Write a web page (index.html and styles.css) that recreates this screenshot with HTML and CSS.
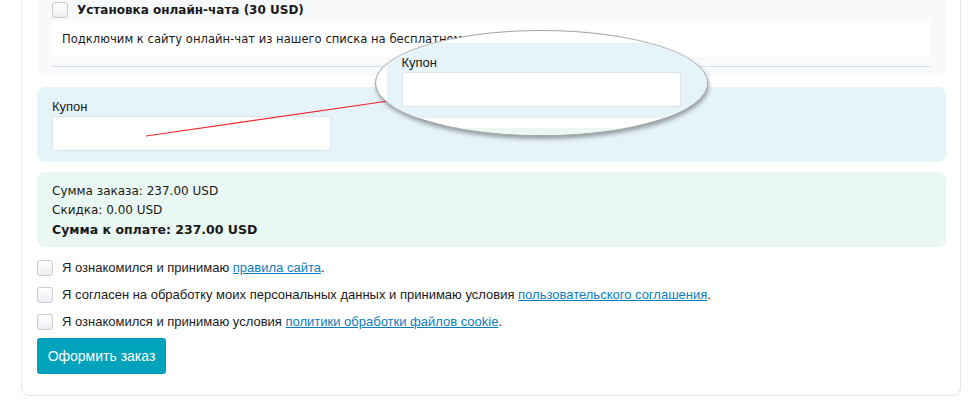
FILE: index.html
```html
<!DOCTYPE html>
<html lang="ru">
<head>
<meta charset="utf-8">
<title>Оформление заказа</title>
<link rel="stylesheet" href="styles.css">
</head>
<body>
<div class="card">
  <section class="service">
    <div class="service-head">
      <span class="cb"></span>
      <span class="service-title">Установка онлайн-чата (30 USD)</span>
    </div>
    <div class="service-desc">Подключим к сайту онлайн-чат из нашего списка на бесплатном тарифе.</div>
    <div class="service-rule"></div>
  </section>

  <section class="coupon">
    <label class="coupon-label">Купон</label>
    <div class="coupon-input"></div>
  </section>

  <section class="summary">
    <div>Сумма заказа: 237.00 USD</div>
    <div>Скидка: 0.00 USD</div>
    <div class="summary-total">Сумма к оплате: 237.00 USD</div>
  </section>

  <div class="agree">
    <span class="cb"></span>
    <span>Я ознакомился и принимаю <a href="#">правила сайта</a>.</span>
  </div>
  <div class="agree">
    <span class="cb"></span>
    <span>Я согласен на обработку моих персональных данных и принимаю условия <a href="#">пользовательского соглашения</a>.</span>
  </div>
  <div class="agree">
    <span class="cb"></span>
    <span>Я ознакомился и принимаю условия <a href="#">политики обработки файлов cookie</a>.</span>
  </div>

  <button class="submit">Оформить заказ</button>
</div>

<svg class="pointer" width="977" height="411" viewBox="0 0 977 411">
  <line x1="146" y1="136" x2="392" y2="100.5" stroke="#f0282d" stroke-width="1.2"/>
</svg>

<div class="lens">
  <div class="lens-content">
    <section class="coupon">
      <label class="coupon-label">Купон</label>
      <div class="coupon-input"></div>
    </section>
    <section class="summary lens-summary"></section>
  </div>
</div>
</body>
</html>
```

FILE: styles.css
```css
html, body {
  margin: 0;
  padding: 0;
  background: #ffffff;
}

body {
  font-family: "DejaVu Sans", sans-serif;
  color: #1a1a1a;
  overflow: hidden;
  height: 411px;
  position: relative;
}

.card {
  box-sizing: border-box;
  width: 940px;
  margin: -34px 0 0 21px;
  border: 1px solid #e2e6ef;
  border-radius: 8px;
  padding: 0 14px 21px 15px;
  font-family: "Liberation Sans", sans-serif;
  font-size: 13px;
}

.service {
  background: #f8f9fb;
  border-radius: 8px;
  padding: 33px 15px 9px 15px;
}

.service-head {
  display: flex;
  align-items: center;
  gap: 9px;
  height: 20px;
  margin-bottom: 1px;
}

.service-title {
  font-family: "DejaVu Sans", sans-serif;
  font-weight: bold;
  font-size: 12px;
}

.service-desc {
  background: #ffffff;
  height: 36px;
  line-height: 37px;
  padding: 0 10px;
  font-family: "DejaVu Sans", sans-serif;
  font-size: 11.6px;
  white-space: nowrap;
  overflow: hidden;
}

.service-rule {
  margin-top: 9px;
  border-top: 1px solid #d6e0ea;
}

.cb {
  box-sizing: border-box;
  flex: none;
  display: inline-block;
  width: 16px;
  height: 16px;
  border: 1px solid #c9cbcf;
  border-radius: 3px;
  background: linear-gradient(#ffffff, #eceef1);
}

.coupon {
  margin-top: 11px;
  background: #e6f4fa;
  border-radius: 8px;
  padding: 10px 15px 11px 15px;
  height: 75px;
  box-sizing: border-box;
}

.coupon-label {
  display: block;
  line-height: 19px;
  font-size: 13px;
}

.coupon-input {
  box-sizing: border-box;
  width: 279px;
  height: 35px;
  background: #ffffff;
  border: 1px solid #dbe7ee;
  border-radius: 3px;
}

.summary {
  margin-top: 10px;
  background: #eaf8f3;
  border-radius: 8px;
  padding: 10px 15px 8px 15px;
  height: 75px;
  box-sizing: border-box;
  font-family: "DejaVu Sans", sans-serif;
  font-size: 12px;
  line-height: 19px;
}

.summary-total {
  font-weight: bold;
  font-size: 12.5px;
}

.agree {
  display: flex;
  align-items: center;
  gap: 9px;
  height: 27px;
  font-size: 13px;
}

.summary + .agree {
  margin-top: 7px;
}

.agree a {
  color: #0b7dc1;
  text-decoration: underline;
}

.submit {
  display: block;
  margin-top: 3px;
  width: 129px;
  height: 36px;
  background: #00a3bb;
  color: #ffffff;
  border: none;
  border-radius: 3px;
  font-family: "Liberation Sans", sans-serif;
  font-size: 14px;
  padding: 0;
}

.pointer {
  position: absolute;
  left: 0;
  top: 0;
  pointer-events: none;
}

.lens {
  position: absolute;
  left: 375px;
  top: 30px;
  width: 333px;
  height: 106px;
  box-sizing: border-box;
  border: 1.5px solid #a6a6a6;
  border-radius: 50%;
  background: #ffffff;
  overflow: hidden;
  box-shadow: 1px 3px 4px rgba(0, 0, 0, 0.35);
  font-family: "Liberation Sans", sans-serif;
  font-size: 13px;
  color: #1a1a1a;
}

.lens-content {
  position: absolute;
  left: 10.5px;
  top: 0.5px;
  width: 908px;
}

.lens-summary {
  height: 40px;
}
```
